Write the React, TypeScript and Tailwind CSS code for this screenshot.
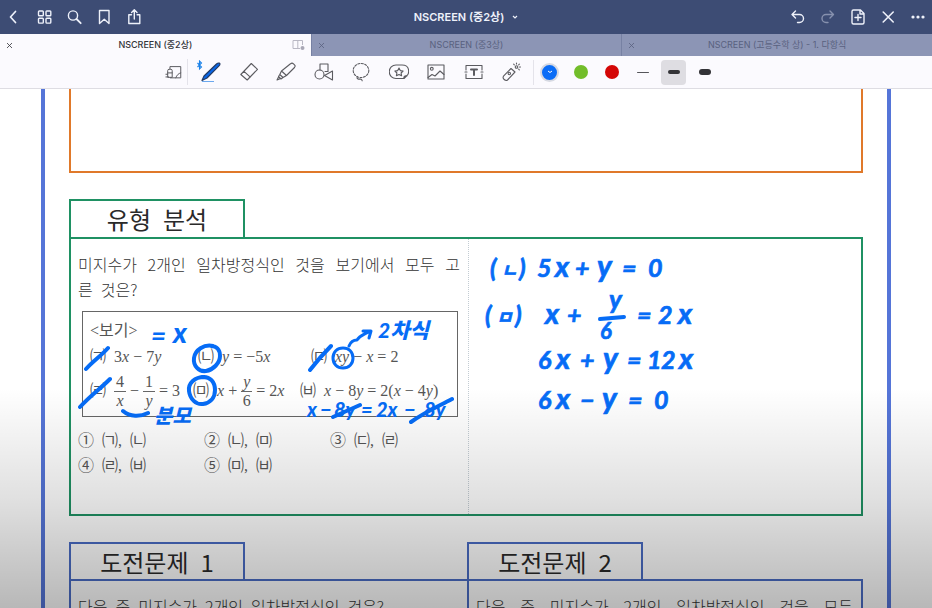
import type { ReactNode } from "react";

const UI = "font-['Inter','Noto_Sans_CJK_KR',sans-serif]";
const MATH = "font-['Liberation_Serif','Noto_Sans_CJK_KR',serif]";
const INK = "#066cf6";

function Icon({ children, size = 20, width = 1.4 }: { children: ReactNode; size?: number; width?: number }) {
  return (
    <svg
      width={size}
      height={size}
      viewBox="0 0 20 20"
      fill="none"
      stroke="currentColor"
      strokeWidth={width}
      strokeLinecap="round"
      strokeLinejoin="round"
      aria-hidden="true"
    >
      {children}
    </svg>
  );
}

function NavButton({ label, dim, children }: { label: string; dim?: boolean; children: ReactNode }) {
  return (
    <button
      type="button"
      aria-label={label}
      className={`flex h-full w-[30px] items-center justify-center ${dim ? "text-[#8791ae]" : "text-[#eef1fa]"}`}
    >
      <Icon>{children}</Icon>
    </button>
  );
}

function Header() {
  return (
    <header className="grid h-[34px] shrink-0 grid-cols-3 bg-[#3d4c74]">
      <nav className="flex">
        <NavButton label="Back">
          <path d="M10.5 4.500 5.500 10l5 5.500" strokeWidth="1.700" />
        </NavButton>
        <NavButton label="Thumbnails">
          <rect x="3.500" y="4" width="4.800" height="4.800" rx="0.800" />
          <rect x="11" y="4" width="4.800" height="4.800" rx="0.800" />
          <rect x="3.500" y="11.300" width="4.800" height="4.800" rx="0.800" />
          <rect x="11" y="11.300" width="4.800" height="4.800" rx="0.800" />
        </NavButton>
        <NavButton label="Search">
          <circle cx="8" cy="8.500" r="4.600" />
          <path d="m11.500 12 4.200 4.200" strokeWidth="1.800" />
        </NavButton>
        <NavButton label="Bookmark">
          <path d="M4.500 3.500h9.500v13l-4.750-4.200-4.750 4.200z" />
        </NavButton>
        <NavButton label="Share">
          <path d="M6.500 7.800H3.800v8.700h11V7.800h-2.700M9.300 12V3M6.600 5.500 9.300 2.800 12 5.500" />
        </NavButton>
      </nav>
      <button type="button" className="flex items-center justify-center gap-2 text-[11px] font-semibold text-[#eef1fa]">
        <span>NSCREEN (중2상)</span>
        <svg width="6" height="4" viewBox="0 0 6 4" fill="none" stroke="currentColor" strokeWidth="1.200" aria-hidden="true">
          <path d="M1 1l2 2 2-2" />
        </svg>
      </button>
      <nav className="flex justify-end">
        <NavButton label="Undo">
          <path d="M8.500 4 5 7.500 8.500 11M5.500 7.500h7a4 4 0 0 1 0 8H10.500" />
        </NavButton>
        <NavButton label="Redo" dim>
          <path d="M13 4l3.500 3.500L13 11M16 7.500H9a4 4 0 0 0 0 8h2" />
        </NavButton>
        <NavButton label="Add page">
          <path d="M6.500 3h7l3.500 3.500v9a1.500 1.500 0 0 1-1.500 1.500h-9A1.500 1.500 0 0 1 5 15.500v-11A1.500 1.500 0 0 1 6.500 3zM13 3v4h4M11 7.500v6M8 10.500h6" />
        </NavButton>
        <NavButton label="Close">
          <path d="M6.200 5 16.200 15M16.200 5 6.200 15" strokeWidth="1.600" />
        </NavButton>
        <NavButton label="More">
          <g fill="currentColor" stroke="none">
            <circle cx="6" cy="10" r="1.600" />
            <circle cx="11" cy="10" r="1.600" />
            <circle cx="16" cy="10" r="1.600" />
          </g>
        </NavButton>
      </nav>
    </header>
  );
}

function Tab({ title, active }: { title: string; active?: boolean }) {
  return (
    <div
      className={`flex items-center justify-between px-[6px] text-[9px] ${
        active ? "bg-[#fbfafe] font-medium text-[#33343a]" : "border-l border-[#7781a3] bg-[#8c95b5] text-[#59617f]"
      }`}
    >
      <button type="button" aria-label={`Close ${title}`} className="flex w-4">
        <svg width="7" height="7" viewBox="0 0 7 7" stroke="currentColor" strokeWidth="0.800" aria-hidden="true">
          <path d="M1 1l5 5M6 1 1 6" />
        </svg>
      </button>
      <button type="button">{title}</button>
      <span className="flex w-4 justify-end">
        {active && (
          <svg width="13" height="12" viewBox="0 0 13 12" fill="none" stroke="#b9b8c4" aria-hidden="true">
            <path d="M8 9.500H1v-8h9.500v4.500M5.800 1.500v8" />
            <circle cx="10.500" cy="9" r="2" fill="#a9a8b6" stroke="none" />
          </svg>
        )}
      </span>
    </div>
  );
}

const TOOLS: { name: string; art: ReactNode }[] = [
  {
    name: "Eraser",
    art: <path d="M12.300 1.500 18.500 7.300 8.200 18 1.800 12.500zM5 9.300l6.300 5.800" />,
  },
  {
    name: "Highlighter",
    art: <path d="M14.500 1.800c1-1 2-1 3 0l1 1c1 1 .8 1.800 0 2.700l-8 8-5-4.500zM5.500 9 3.800 12.500 7 15.500l3.500-2M3.800 12.500 2.500 14.500 5 17l2-1.500M2.500 15 1 18l3-1.300" />,
  },
  {
    name: "Shapes",
    art: (
      <>
        <path d="M6 8V2h8v7.500h-3" />
        <circle cx="5.500" cy="12.500" r="4.500" />
        <path d="M10.500 13.500l8-4.500v9z" />
      </>
    ),
  },
  {
    name: "Lasso",
    art: (
      <>
        <ellipse cx="10" cy="8.500" rx="7.800" ry="7" strokeDasharray="2 1.500" />
        <path d="M6.500 14.500c-1.500 2 1 3 3 2.500 1 0 1.500.8 1.700 1.800" />
      </>
    ),
  },
  {
    name: "Elements",
    art: (
      <>
        <path d="M15 16.500H7a6.500 6.500 0 0 1 0-13.500h6c9 0 7 9.500 4.500 11zM15 16.500c-.5-2 .5-3 3-2.500" />
        <path d="m10 6 1.300 2.600 2.800.4-2 2 .5 2.800L10 12.500l-2.600 1.300.5-2.800-2-2 2.800-.4z" />
      </>
    ),
  },
  {
    name: "Image",
    art: (
      <>
        <rect x="2" y="3" width="16" height="14" />
        <circle cx="5.800" cy="6.800" r="1.400" />
        <path d="M2 15.500l4-3 3 1.500 5-5 4 3.500" />
      </>
    ),
  },
  {
    name: "Text",
    art: (
      <>
        <path d="M2 8V3.500h16V8M2 12v4.500h16V12M1 10h2M17 10h2" />
        <path d="M7 7.500h6M10 7.500V13" strokeWidth="2" />
      </>
    ),
  },
  {
    name: "Laser pointer",
    art: (
      <>
        <path d="M10 6.500l4 3.500-7.500 8c-2 1.500-5.500-1.500-4-3.800z" />
        <circle cx="8.300" cy="11.500" r="1.200" />
        <circle cx="15.500" cy="5" r="1.300" />
        <path d="M15.500 1v1M19.500 5h-1M12.700 2.200l.6.600M18.300 2.200l-.6.600M18.300 7.800l-.6-.6" />
      </>
    ),
  },
];

const COLOURS = [
  { name: "Green", fill: "bg-[#72bd2a]" },
  { name: "Red", fill: "bg-[#d40606]" },
];

const WIDTHS = [
  { name: "Thin", bar: "h-[1px] bg-[#55555a]", selected: false },
  { name: "Medium", bar: "h-[4px] bg-[#333337]", selected: true },
  { name: "Thick", bar: "h-[6px] bg-[#333337]", selected: false },
];

function Toolbar() {
  return (
    <div
      role="toolbar"
      aria-label="Drawing tools"
      className="flex h-[33px] shrink-0 items-center border-b border-[#dedde3] bg-[#fbfafe] pl-40 text-[#5b5b60]"
    >
      <button type="button" aria-label="Zoom window" className="flex w-7 justify-center border-r border-[#e4e3ea] py-1">
        <Icon size={18} width={1.1}>
          <path d="M5.500 6.500V4H17.500v12.500H6M12 16.500c1-3 3-5 5.500-5.500M1 15.500h3" />
          <path d="M3 15.500V8.500a1.500 1.500 0 0 1 1.500-1.500h2A1.500 1.500 0 0 1 8 8.500v7zM3 11h5M1 12.500h2" />
        </Icon>
      </button>
      <button type="button" aria-label="Pen" className="flex w-[42px] justify-center">
        <svg width="28" height="24" viewBox="0 0 28 24" fill="none" aria-hidden="true">
          <path d="M2.500 3l4 4-2 2V1l2 2-4 4" stroke="#1b82e8" strokeWidth="1.100" />
          <path d="M7 20.500l2-4.500L21.500 4c2-1.800 4.500-1 3 1.300L12 18z" fill="#0a66e6" stroke="#233a63" strokeWidth="1.200" strokeLinejoin="round" />
          <path d="M7 21.500h12" stroke="#6ba8ee" />
        </svg>
      </button>
      <div className="flex w-[300px]">
        {TOOLS.map((tool) => (
          <button key={tool.name} type="button" aria-label={tool.name} className="flex flex-1 justify-center">
            <Icon width={1.1}>{tool.art}</Icon>
          </button>
        ))}
      </div>
      <div className="ml-[3px] flex items-center border-l border-[#e4e3ea]">
        <button type="button" aria-label="Blue" className="flex w-[31px] justify-center">
          <span className="flex size-[19px] items-center justify-center rounded-full border-2 border-[#d6d9e2] bg-[#0a6cf6]">
            <svg width="6" height="4" viewBox="0 0 6 4" fill="none" stroke="#fff" aria-hidden="true">
              <path d="M1 1l2 1.500L5 1" />
            </svg>
          </span>
        </button>
        {COLOURS.map((colour) => (
          <button key={colour.name} type="button" aria-label={colour.name} className="flex w-[31px] justify-center">
            <span className={`size-[14px] rounded-full ${colour.fill}`} />
          </button>
        ))}
        {WIDTHS.map((line) => (
          <button key={line.name} type="button" aria-label={line.name} className="flex w-[31px] justify-center">
            <span className={`flex size-[25px] items-center justify-center rounded-sm ${line.selected ? "bg-[#dedde2]" : ""}`}>
              <span className={`w-3 rounded-full ${line.bar}`} />
            </span>
          </button>
        ))}
      </div>
    </div>
  );
}

function Fraction({ top, bottom }: { top: ReactNode; bottom: ReactNode }) {
  return (
    <span className="inline-flex flex-col items-center text-center leading-[18px]">
      <span className="border-b border-[#666] px-[2px]">{top}</span>
      <span>{bottom}</span>
    </span>
  );
}

function Item({ mark, children }: { mark: string; children: ReactNode }) {
  return (
    <span className="flex items-center gap-2 whitespace-nowrap">
      <span>{mark}</span>
      <span className="flex items-center gap-1">{children}</span>
    </span>
  );
}

/* Pen strokes and notes lying over the printed problem. */
function ProblemInk() {
  return (
    <svg
      className="pointer-events-none absolute top-0 left-0 h-[277px] w-[397px] overflow-visible font-['Lato','Noto_Sans_CJK_KR',sans-serif] font-black italic"
      viewBox="71 239 397 277"
      fill={INK}
    >
      <g fill="none" stroke={INK} strokeWidth="4" strokeLinecap="round" strokeLinejoin="round">
        <path d="M86 369c7-8 15-13 22-21M80 407c10-11 20-18 30-28M310 370c7-9 14-17 21-24" />
        <path d="M213 346c-9-2-18 4-19 12s5 14 12 13 14-8 14-15-4-10-9-10" />
        <path d="M204 377c-9 0-16 6-15 14s7 14 14 13 12-6 12-14-5-14-13-13" />
        <path d="M343 348c-6 0-10 4-10 10s4 10 10 10 10-4 10-10-4-10-10-10" strokeWidth="3" />
        <path d="M349 346c2-5 5-6 8-6 3-5 7-5 13-9M363 331h8l-2 7" strokeWidth="3" />
        <path d="M123 411c7 6 17 6 25 2M333 417l27-12M411 422c14-10 26-15 41-23" />
      </g>
      <text x="151" y="345" fontSize="26">=</text>
      <text x="173" y="343" fontSize="28">x</text>
      <text x="378" y="338" fontSize="21">2차식</text>
      <text x="154" y="423" fontSize="20">분모</text>
      <g fontSize="20">
        <text x="307" y="417">x</text>
        <text x="320" y="417">−</text>
        <text x="334" y="417">8y</text>
        <text x="361" y="417">=</text>
        <text x="376" y="417">2x</text>
        <text x="404" y="417">−</text>
        <text x="424" y="417">8y</text>
      </g>
    </svg>
  );
}

const SOLUTION: { y: number; tokens: [number, string][] }[] = [
  { y: 277, tokens: [[490, "("], [501, "ㄴ"], [519, ")"], [537, "5"], [555, "x"], [575, "+"], [597, "y"], [622, "="], [648, "0"]] },
  { y: 324, tokens: [[485, "("], [496, "ㅁ"], [515, ")"], [545, "x"], [567, "+"], [637, "="], [658, "2"], [678, "x"]] },
  { y: 369, tokens: [[538, "6"], [556, "x"], [580, "+"], [603, "y"], [627, "="], [647, "1"], [661, "2"], [679, "x"]] },
  { y: 409, tokens: [[538, "6"], [556, "x"], [580, "−"], [602, "y"], [628, "="], [654, "0"]] },
];

const GLYPH_SIZE: Record<string, number> = { ㄴ: 18, ㅁ: 18, x: 29, y: 30 };

function SolutionInk() {
  return (
    <svg
      className="h-[190px] w-[260px] overflow-visible font-['Lato','Noto_Sans_CJK_KR',sans-serif] font-bold italic"
      viewBox="469 239 260 190"
      fill={INK}
      stroke={INK}
      strokeWidth="0.700"
    >
      {SOLUTION.map((line) =>
        line.tokens.map(([x, glyph]) => (
          <text key={`${line.y}-${x}`} x={x} y={line.y} fontSize={GLYPH_SIZE[glyph] ?? 25}>
            {glyph}
          </text>
        )),
      )}
      <text x="609" y="309" fontSize="26">y</text>
      <text x="600" y="339" fontSize="22">6</text>
      <path d="M600 319l24-2" strokeWidth="4" strokeLinecap="round" />
    </svg>
  );
}

const CHOICES = [
  ["①", "㈀,", "㈁"],
  ["②", "㈁,", "㈄"],
  ["③", "㈂,", "㈃"],
  ["④", "㈃,", "㈅"],
  ["⑤", "㈄,", "㈅"],
];

function TypeAnalysis() {
  return (
    <section className="mt-[26px]">
      <h2 className="flex h-[38px] w-44 items-center justify-center gap-3 border-2 border-b-0 border-[#1f9163] text-2xl font-normal text-[#2a2a2a]">
        <span>유형</span>
        <span>분석</span>
      </h2>
      <div className="relative grid min-h-[279px] grid-cols-[398fr_392fr] border-2 border-[#1f9163] text-[#555]">
        <div className="border-r border-dotted border-[#c3ccd3] pt-[13px] pr-2 pl-[7px]">
          <p className="text-base leading-[25px] font-light text-[#333]">
            <span className="block [text-align-last:justify]">미지수가 2개인 일차방정식인 것을 보기에서 모두 고</span>
            <span className="flex gap-2">
              <span>른</span>
              <span>것은?</span>
            </span>
          </p>
          <div className={`mt-[9px] mr-[2px] ml-1 border border-[#666] pt-[7px] pb-[3px] pl-[7px] text-base leading-6 ${MATH}`}>
            <p className="mb-[2px]">&lt;보기&gt;</p>
            <div className="grid h-6 grid-cols-[108px_113px_1fr] items-center">
              <Item mark="㈀">
                <span>3<i>x</i> − 7<i>y</i></span>
              </Item>
              <Item mark="㈁">
                <span><i>y</i> = −5<i>x</i></span>
              </Item>
              <Item mark="㈂">
                <span><i>xy</i> − <i>x</i> = 2</span>
              </Item>
            </div>
            <div className="grid h-11 grid-cols-[103px_107px_1fr] items-center">
              <Item mark="㈃">
                <Fraction top="4" bottom={<i>x</i>} />
                <span>−</span>
                <Fraction top="1" bottom={<i>y</i>} />
                <span>= 3</span>
              </Item>
              <Item mark="㈄">
                <span><i>x</i> +</span>
                <Fraction top={<i>y</i>} bottom="6" />
                <span>= 2<i>x</i></span>
              </Item>
              <Item mark="㈅">
                <span><i>x</i> − 8<i>y</i> = 2(<i>x</i> − 4<i>y</i>)</span>
              </Item>
            </div>
          </div>
          <ul className={`mt-[11px] grid grid-cols-[126px_126px_1fr] text-base leading-[25px] ${MATH}`}>
            {CHOICES.map(([number, first, second]) => (
              <li key={number} className="flex gap-2">
                <span>{number}</span>
                <span>{first}</span>
                <span>{second}</span>
              </li>
            ))}
          </ul>
        </div>
        <div>
          <SolutionInk />
        </div>
        <ProblemInk />
      </div>
    </section>
  );
}

function Challenge({ number, last, children }: { number: number; last?: boolean; children: ReactNode }) {
  return (
    <section className="flex flex-col">
      <h2 className="flex h-[37px] w-44 items-center justify-center gap-3 border-2 border-b-0 border-[#4a6cc4] text-2xl font-normal text-[#2a2a2a]">
        <span>도전문제</span>
        <span>{number}</span>
      </h2>
      <div
        className={`flex-1 border-2 border-[#4a6cc4] pt-[13px] pr-2 pl-[7px] text-base leading-[25px] font-light text-[#333] ${
          last ? "" : "border-r-0"
        }`}
      >
        {children}
      </div>
    </section>
  );
}

export default function App() {
  return (
    <div className={`flex h-screen flex-col overflow-hidden bg-white ${UI}`}>
      <Header />
      <div className="grid h-[22px] shrink-0 grid-cols-3">
        <Tab title="NSCREEN (중2상)" active />
        <Tab title="NSCREEN (중3상)" />
        <Tab title="NSCREEN (고등수학 상) - 1. 다항식" />
      </div>
      <Toolbar />
      <main className="relative min-h-0 flex-1 overflow-hidden bg-white font-['Noto_Sans_CJK_KR',sans-serif]">
        <article className="mx-[41px] min-h-full border-x-4 border-[#5575d8] px-6">
          <div className="h-[84px] border-2 border-t-0 border-[#e0792a]" />
          <TypeAnalysis />
          <div className="mt-[26px] grid h-40 grid-cols-[398fr_396fr]">
            <Challenge number={1}>
              <p className="flex gap-2">
                {"다음 중 미지수가 2개인 일차방정식인 것은?".split(" ").map((word) => (
                  <span key={word}>{word}</span>
                ))}
              </p>
            </Challenge>
            <Challenge number={2} last>
              <p className="[text-align-last:justify]">다음 중 미지수가 2개인 일차방정식인 것을 모두</p>
            </Challenge>
          </div>
        </article>
        <div className="pointer-events-none absolute inset-x-0 bottom-0 h-[220px] bg-linear-to-b from-transparent via-black/12 to-black/28" />
      </main>
    </div>
  );
}
